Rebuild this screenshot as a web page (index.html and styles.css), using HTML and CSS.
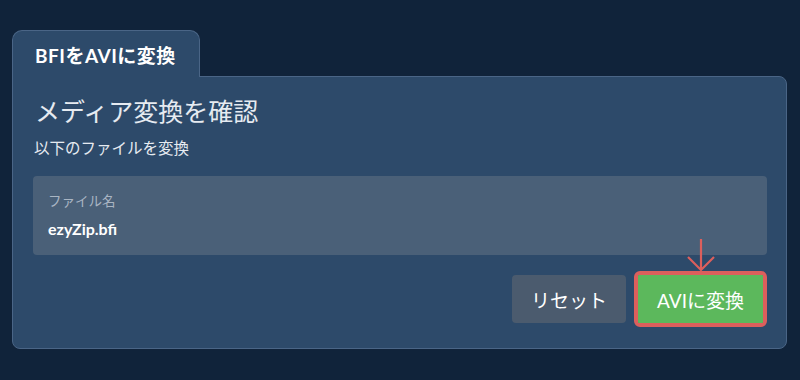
FILE: index.html
```html
<!DOCTYPE html>
<html lang="ja">
<head>
  <meta charset="UTF-8">
  <meta name="viewport" content="width=device-width, initial-scale=1.0">
  <title>BFIをAVIに変換</title>
  <link rel="stylesheet" href="styles.css">
</head>
<body>
  <div class="converter">
    <div class="tab">BFIをAVIに変換</div>
    <div class="panel">
      <h1 class="title">メディア変換を確認</h1>
      <p class="subtitle">以下のファイルを変換</p>
      <div class="file-box">
        <div class="file-label">ファイル名</div>
        <div class="file-name">ezyZip.bfi</div>
      </div>
      <div class="actions">
        <button class="btn reset">リセット</button>
        <div class="convert-wrap">
          <svg class="hint-arrow" width="30" height="34" viewBox="0 0 30 34">
            <path d="M15 1 V32 M2 19 L15 32 L28 19" fill="none" stroke="#dc5f5c" stroke-width="2.2"/>
          </svg>
          <button class="btn convert">AVIに変換</button>
        </div>
      </div>
    </div>
  </div>
</body>
</html>
```

FILE: styles.css
```css
html, body {
  margin: 0;
  background-color: #10233a;
}
body {
  padding: 30px 13px 0 12px;
  font-family: Lato, "Noto Sans CJK JP", sans-serif;
  color: #e6ebf1;
}
.converter {
  display: flex;
  flex-direction: column;
  align-items: flex-start;
}
.tab {
  box-sizing: border-box;
  width: 188px;
  height: 47px;
  padding: 0 0 0 22px;
  display: flex;
  align-items: center;
  background-color: #2d4a6a;
  border: 1px solid #4a6586;
  border-bottom: none;
  border-radius: 10px 10px 0 0;
  font-size: 19px;
  font-weight: 700;
  letter-spacing: 0.5px;
  color: #ffffff;
  position: relative;
  z-index: 1;
  margin-bottom: -1px;
}
.panel {
  box-sizing: border-box;
  width: 100%;
  padding: 19px 19px 21px 20px;
  background-color: #2d4a6a;
  border: 1px solid #4a6586;
  border-radius: 0 8px 8px 8px;
}
.title {
  margin: 0;
  font-size: 25px;
  font-weight: 400;
  line-height: 30px;
  color: #e6ebf1;
  padding-left: 2px;
}
.subtitle {
  margin: 12px 0 0;
  font-size: 15.5px;
  line-height: 21px;
  padding-left: 1px;
}
.file-box {
  margin-top: 17px;
  padding: 16px 15px 16px;
  background-color: #4a6078;
  border-radius: 4px;
}
.file-label {
  font-size: 13.5px;
  line-height: 18px;
  color: #a9b5c3;
}
.file-name {
  margin-top: 9px;
  font-size: 16px;
  line-height: 20px;
  font-weight: 700;
  color: #ffffff;
}
.actions {
  margin-top: 16px;
  display: flex;
  justify-content: flex-end;
  align-items: center;
  gap: 8px;
}
.btn {
  font-family: Lato, "Noto Sans CJK JP", sans-serif;
  font-size: 19px;
  color: #ffffff;
  border: none;
  border-radius: 4px;
  height: 48px;
  cursor: pointer;
}
.reset {
  width: 114px;
  background-color: #4b5b6e;
}
.convert-wrap {
  position: relative;
  border: 4px solid #dc5f5c;
  border-radius: 6px;
  display: flex;
}
.convert {
  width: 125px;
  background-color: #5cb85c;
  border-radius: 1px;
}
.hint-arrow {
  position: absolute;
  left: 50%;
  margin-left: -15px;
  bottom: 100%;
  margin-bottom: 3px;
}
```
